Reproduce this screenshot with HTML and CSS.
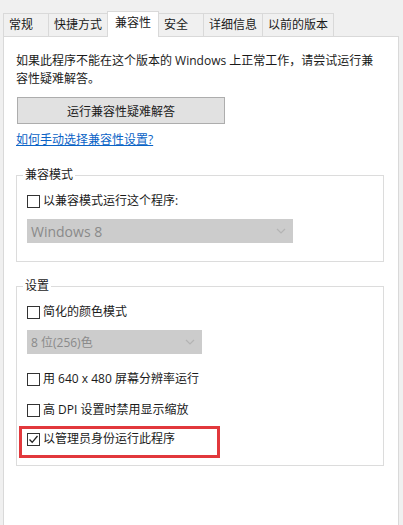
FILE: index.html
```html
<!DOCTYPE html>
<html lang="zh-CN">
<head>
<meta charset="utf-8">
<title>属性 - 兼容性</title>
<link rel="stylesheet" href="styles.css">
</head>
<body>
<div class="window">
  <div class="tabs">
    <div class="tab">常规</div>
    <div class="tab">快捷方式</div>
    <div class="tab active">兼容性</div>
    <div class="tab">安全</div>
    <div class="tab">详细信息</div>
    <div class="tab">以前的版本</div>
  </div>
  <div class="panel">
    <p class="intro">如果此程序不能在这个版本的 Windows 上正常工作，请尝试运行兼容性疑难解答。</p>
    <button class="btn" type="button">运行兼容性疑难解答</button>
    <a class="link" href="#">如何手动选择兼容性设置?</a>

    <fieldset class="group group-compat">
      <legend>兼容模式</legend>
      <label class="check"><span class="box"></span>以兼容模式运行这个程序:</label>
      <div class="select select-wide"><span class="select-value">Windows 8</span>
        <svg class="chev" width="10" height="6" viewBox="0 0 10 6"><polyline points="1,1 5,5 9,1" fill="none" stroke="#b4b4b4" stroke-width="1.2"/></svg>
      </div>
    </fieldset>

    <fieldset class="group group-settings">
      <legend>设置</legend>
      <label class="check"><span class="box"></span>简化的颜色模式</label>
      <div class="select select-narrow"><span>8 位(256)色</span>
        <svg class="chev" width="10" height="6" viewBox="0 0 10 6"><polyline points="1,1 5,5 9,1" fill="none" stroke="#b4b4b4" stroke-width="1.2"/></svg>
      </div>
      <label class="check check-640"><span class="box"></span>用 640 x 480 屏幕分辨率运行</label>
      <label class="check check-dpi"><span class="box"></span>高 DPI 设置时禁用显示缩放</label>
      <label class="check check-admin highlighted"><span class="box checked">
        <svg width="11" height="11" viewBox="0 0 11 11"><polyline points="1.5,5.5 4.2,8.3 9.5,2" fill="none" stroke="#222" stroke-width="1.3"/></svg>
      </span>以管理员身份运行此程序</label>
    </fieldset>
  </div>
</div>
</body>
</html>
```
FILE: styles.css
```css
html, body {
  margin: 0;
  padding: 0;
  height: 100%;
}
body {
  background: #f0f0f0;
  font-family: "Open Sans", "Noto Sans CJK SC", sans-serif;
  font-size: 12px;
  color: #1a1a1a;
}
.window {
  display: flex;
  flex-direction: column;
  height: 100%;
  padding: 0 4px 0 3px;
  box-sizing: border-box;
}
.tabs {
  display: flex;
  align-items: flex-end;
  padding-top: 11px;
  height: 25px;
  position: relative;
  z-index: 1;
}
.tab {
  box-sizing: border-box;
  min-width: 46px;
  height: 23px;
  line-height: 21px;
  padding: 0 5px;
  border: 1px solid #d9d9d9;
  border-bottom: none;
  margin-right: -1px;
  background: #f0f0f0;
  white-space: nowrap;
}
.tab.active {
  height: 26px;
  line-height: 22px;
  padding: 0 7px 2px;
  background: #fff;
  margin-bottom: -1px;
  position: relative;
  z-index: 2;
}
.panel {
  flex: 1;
  background: #fff;
  border: 1px solid #d9d9d9;
  border-bottom: none;
  padding: 15px 14px 0 12px;
  display: flex;
  flex-direction: column;
  align-items: flex-start;
}
.intro {
  margin: 0;
  line-height: 18px;
  width: 367px;
}
.btn {
  margin-top: 9px;
  width: 208px;
  height: 27px;
  margin-left: 1px;
  background: #e1e1e1;
  border: 1px solid #adadad;
  font: inherit;
  color: #1a1a1a;
  padding: 0;
}
.link {
  margin-top: 7px;
  line-height: 18px;
  color: #0a63c6;
  text-decoration: underline;
}
.group {
  align-self: stretch;
  margin: 0;
  border: 1px solid #dcdcdc;
  padding: 8px 10px 18px;
  min-width: 0;
}
.group legend {
  padding: 0 2px;
  margin-left: -4px;
  line-height: 18px;
}
.group-compat {
  margin-top: 17px;
}
.group-settings {
  margin-top: 15px;
  padding-bottom: 17px;
}
.check {
  display: flex;
  align-items: center;
  line-height: 18px;
  height: 18px;
}
.box {
  width: 11px;
  height: 11px;
  border: 1px solid #333;
  background: #fff;
  margin-right: 3px;
  display: flex;
  align-items: center;
  justify-content: center;
  flex: none;
}
.select {
  margin-top: 9px;
  height: 24px;
  background: #cccccc;
  color: #8a8a8a;
  display: flex;
  align-items: center;
  justify-content: space-between;
  padding: 0 5px 0 4px;
  box-sizing: border-box;
}
.select-value {
  font-size: 14px;
}
.select-wide {
  width: 266px;
}
.select-narrow {
  width: 175px;
}
.chev {
  margin-right: 2px;
}
.check-640 {
  margin-top: 16px;
}
.check-dpi {
  margin-top: 13px;
}
.check-admin {
  margin-top: 11px;
}
.highlighted {
  position: relative;
}
.highlighted::after {
  content: "";
  position: absolute;
  left: -8px;
  top: -4px;
  width: 195px;
  height: 26px;
  border: 3px solid #e2383c;
}
```
